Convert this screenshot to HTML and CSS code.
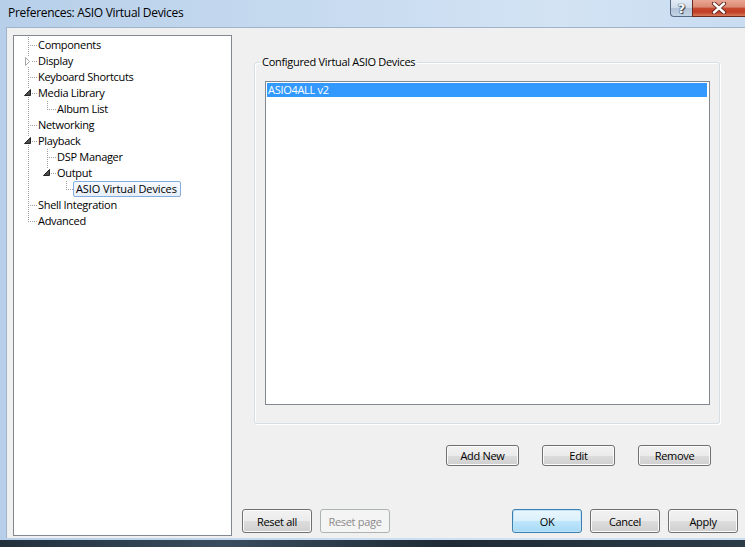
FILE: index.html
```html
<!DOCTYPE html>
<html>
<head>
<meta charset="utf-8">
<link rel="stylesheet" href="styles.css">
</head>
<body>
<div class="window">
  <div class="titlebar">
    <span class="title">Preferences: ASIO Virtual Devices</span>
    <div class="caption">
      <span class="cap-btn help">?</span>
      <span class="cap-btn close">
        <svg width="16" height="12" viewBox="0 0 16 12"><path d="M3 1.5 L13 10.5 M13 1.5 L3 10.5" stroke="#5a1f16" stroke-width="4.2" stroke-linecap="round"/><path d="M3 1.5 L13 10.5 M13 1.5 L3 10.5" stroke="#ffffff" stroke-width="2.4" stroke-linecap="round"/></svg>
      </span>
    </div>
  </div>
  <div class="frame">
    <div class="client">
      <div class="tree">
        <div class="row"><span class="cell tee"></span><span class="label">Components</span></div>
        <div class="row"><span class="cell tee"><svg width="19" height="16" viewBox="0 0 19 16"><rect x="5" y="3" width="7" height="11" fill="#fff"/><path d="M6.5 4.5 L10.5 8.5 L6.5 12.5 Z" fill="#fff" stroke="#a6a6a6"/></svg></span><span class="label">Display</span></div>
        <div class="row"><span class="cell tee"></span><span class="label">Keyboard Shortcuts</span></div>
        <div class="row"><span class="cell tee"><svg width="19" height="16" viewBox="0 0 19 16"><rect x="5" y="3" width="8" height="9" fill="#fff"/><path d="M11.5 4.5 L11.5 10.5 L5.5 10.5 Z" fill="#4d4d4d" stroke="#262626"/></svg></span><span class="label">Media Library</span></div>
        <div class="row"><span class="cell pipe"></span><span class="cell ell"></span><span class="label">Album List</span></div>
        <div class="row"><span class="cell tee"></span><span class="label">Networking</span></div>
        <div class="row"><span class="cell tee"><svg width="19" height="16" viewBox="0 0 19 16"><rect x="5" y="3" width="8" height="9" fill="#fff"/><path d="M11.5 4.5 L11.5 10.5 L5.5 10.5 Z" fill="#4d4d4d" stroke="#262626"/></svg></span><span class="label">Playback</span></div>
        <div class="row"><span class="cell pipe"></span><span class="cell tee"></span><span class="label">DSP Manager</span></div>
        <div class="row"><span class="cell pipe"></span><span class="cell ell"><svg width="19" height="16" viewBox="0 0 19 16"><rect x="5" y="3" width="8" height="9" fill="#fff"/><path d="M11.5 4.5 L11.5 10.5 L5.5 10.5 Z" fill="#4d4d4d" stroke="#262626"/></svg></span><span class="label">Output</span></div>
        <div class="row"><span class="cell pipe"></span><span class="cell"></span><span class="cell ell"></span><span class="label selected">ASIO Virtual Devices</span></div>
        <div class="row"><span class="cell tee"></span><span class="label">Shell Integration</span></div>
        <div class="row"><span class="cell ell"></span><span class="label">Advanced</span></div>
      </div>
      <div class="pane">
        <fieldset class="group">
          <legend>Configured Virtual ASIO Devices</legend>
          <div class="listbox">
            <div class="item selected-item">ASIO4ALL v2</div>
          </div>
        </fieldset>
        <div class="actions">
          <button class="btn small">Add New</button>
          <button class="btn small">Edit</button>
          <button class="btn small">Remove</button>
        </div>
        <div class="footer">
          <div class="btn-group">
            <button class="btn">Reset all</button>
            <button class="btn disabled">Reset page</button>
          </div>
          <div class="btn-group right">
            <button class="btn default">OK</button>
            <button class="btn">Cancel</button>
            <button class="btn">Apply</button>
          </div>
        </div>
      </div>
    </div>
  </div>
  <div class="taskbar"></div>
</div>
</body>
</html>
```

FILE: styles.css
```css
html, body {
  margin: 0;
  padding: 0;
}
body {
  width: 745px;
  height: 547px;
  overflow: hidden;
  font-family: "Open Sans", "Noto Sans", sans-serif;
  font-size: 11px;
  letter-spacing: -0.3px;
  color: #000;
}
.window {
  display: flex;
  flex-direction: column;
  height: 547px;
  background: linear-gradient(to right, #b7cfe9 0%, #c6daef 40%, #d3e3f4 75%, #c9dcf0 100%);
}
.titlebar {
  height: 27px;
  display: flex;
  align-items: flex-start;
  flex: none;
}
.title {
  padding: 5px 0 0 8px;
  font-size: 12px;
  line-height: 16px;
}
.caption {
  margin-left: auto;
  display: flex;
}
.cap-btn {
  height: 17px;
  box-sizing: border-box;
  display: flex;
  align-items: center;
  justify-content: center;
  letter-spacing: 0;
}
.help {
  width: 22px;
  border: 1px solid #566a84;
  border-top: none;
  border-right: none;
  border-radius: 0 0 0 4px;
  background: linear-gradient(#e2ebf5 0%, #cfdbe9 50%, #b3c3d8 51%, #c3d3e6 100%);
  color: #fff;
  font-weight: bold;
  font-size: 13px;
  font-family: "DejaVu Sans", sans-serif;
  text-shadow: 0 0 1px #2d3d52, 0 0 1px #2d3d52, 1px 1px 1px #2d3d52;
}
.close {
  width: 53px;
  border: 1px solid #6b2a20;
  border-top: none;
  border-right: none;
  background: linear-gradient(#eaa795 0%, #d98a72 45%, #c64a31 50%, #c13d25 75%, #d87a5a 100%);
}
.frame {
  flex: 1;
  display: flex;
  padding: 0 0 2px 6px;
  min-height: 0;
}
.client {
  flex: 1;
  display: flex;
  background: #f0f0f0;
  border-top: 1px solid #9fb3ca;
  border-left: 1px solid #9fb3ca;
  padding: 7px 0 2px 6px;
}
.tree {
  width: 219px;
  box-sizing: border-box;
  flex: none;
  background: #fff;
  border: 1px solid #828790;
  padding: 1px 0 0 5px;
}
.row {
  display: flex;
  height: 16px;
  line-height: 16px;
  white-space: nowrap;
}
.cell {
  width: 19px;
  height: 16px;
  flex: none;
  display: block;
  background-repeat: no-repeat;
}
.cell svg {
  display: block;
}
.tee {
  background-image:
    repeating-linear-gradient(to bottom, #a0a0a0 0 1px, transparent 1px 2px),
    repeating-linear-gradient(to right, #a0a0a0 0 1px, transparent 1px 2px);
  background-position: 9px 0, 9px 8px;
  background-size: 1px 16px, 9px 1px;
}
.ell {
  background-image:
    repeating-linear-gradient(to bottom, #a0a0a0 0 1px, transparent 1px 2px),
    repeating-linear-gradient(to right, #a0a0a0 0 1px, transparent 1px 2px);
  background-position: 9px 0, 9px 8px;
  background-size: 1px 9px, 9px 1px;
}
.pipe {
  background-image: repeating-linear-gradient(to bottom, #a0a0a0 0 1px, transparent 1px 2px);
  background-position: 9px 0;
  background-size: 1px 16px;
}
.label {
  display: block;
  margin-left: -3px;
  padding: 0 2px;
  border: 1px solid transparent;
  line-height: 14px;
  height: 14px;
}
.label.selected {
  border-color: #84acdd;
  border-radius: 2px;
  background: linear-gradient(#f7fafe, #e6eef9);
  letter-spacing: -0.1px;
  padding: 0 3px 0 2px;
}
.pane {
  flex: 1;
  display: flex;
  flex-direction: column;
  padding: 0 0 0 10px;
}
.group {
  margin: 19px 25px 0 12px;
  padding: 11px 9px 18px 10px;
  border: 1px solid #d5dfe5;
  border-radius: 3px;
  box-shadow: inset 1px 1px 0 #fff, 1px 1px 0 #fff;
  min-width: 0;
}
.group legend {
  padding: 0 2px;
  margin-left: -5px;
  line-height: 16px;
  font-size: 11px;
}
.listbox {
  height: 324px;
  box-sizing: border-box;
  background: #fff;
  border: 1px solid #828790;
  padding: 1px 1px 1px 1px;
}
.item {
  height: 14px;
  line-height: 14px;
  padding-left: 1px;
  margin-right: 1px;
}
.selected-item {
  background: #3399ff;
  color: #fff;
}
.actions {
  display: flex;
  justify-content: flex-end;
  gap: 23px;
  margin: 21px 34px 0 0;
}
.btn {
  width: 70px;
  height: 24px;
  box-sizing: border-box;
  padding: 0;
  font-family: inherit;
  font-size: 11px;
  letter-spacing: -0.3px;
  color: #000;
  border: 1px solid #707070;
  border-radius: 3px;
  background: linear-gradient(#f2f2f2 0%, #ebebeb 50%, #dddddd 51%, #cfcfcf 100%);
  box-shadow: inset 0 0 0 1px #fbfbfb;
}
.btn.small {
  width: 73px;
  height: 21px;
}
.btn.disabled {
  border-color: #adb2b5;
  background: #f4f4f4;
  color: #8b8b8b;
  box-shadow: none;
}
.btn.default {
  border-color: #3c7fb1;
  background: linear-gradient(#eaf6fd 0%, #d9f0fc 50%, #bee6fd 51%, #a7d9f5 100%);
  box-shadow: inset 0 0 0 1px #bfe3f8;
}
.footer {
  display: flex;
  margin: 43px 0 0 0;
}
.btn-group {
  display: flex;
  gap: 8px;
}
.btn-group.right {
  margin-left: auto;
  margin-right: 7px;
}
.taskbar {
  height: 7px;
  flex: none;
  background: linear-gradient(to right, #22303c, #3a4d5e 30%, #1e2b36 60%, #2c3b48);
}
```
